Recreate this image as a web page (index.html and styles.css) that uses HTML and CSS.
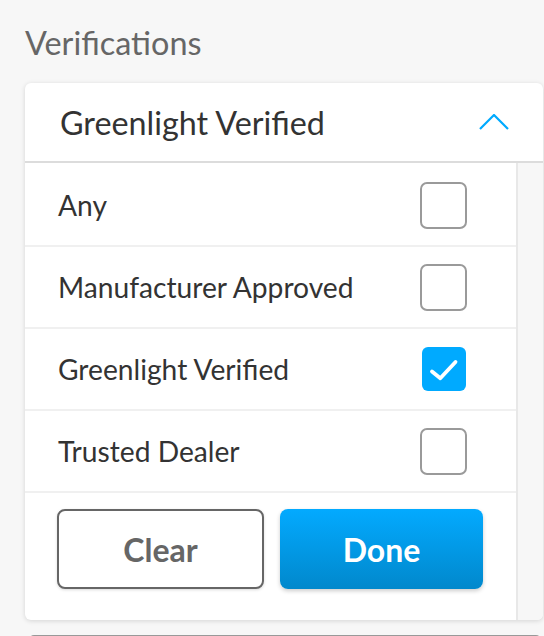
FILE: index.html
```html
<!DOCTYPE html>
<html>
<head>
<meta charset="utf-8">
<link rel="stylesheet" href="styles.css">
</head>
<body>
<div class="page">
  <h2 class="section-title">Verifications</h2>
  <div class="card">
    <div class="card-header">
      <span class="card-title">Greenlight Verified</span>
      <svg class="chevron" width="30" height="16" viewBox="0 0 30 16"><path d="M1 15 L15 1 L29 15" fill="none" stroke="#00aaff" stroke-width="2.2"/></svg>
    </div>
    <div class="card-body">
      <div class="list">
        <div class="row"><span class="label">Any</span><span class="box"></span></div>
        <div class="row"><span class="label">Manufacturer Approved</span><span class="box"></span></div>
        <div class="row"><span class="label">Greenlight Verified</span><span class="box checked"><svg width="44" height="44" viewBox="0 0 44 44"><path d="M10 24.5 L18.3 31.3 L33.5 15" fill="none" stroke="#fff" stroke-width="3.8" stroke-linecap="round" stroke-linejoin="round"/></svg></span></div>
        <div class="row"><span class="label">Trusted Dealer</span><span class="box"></span></div>
        <div class="actions">
          <button class="btn btn-clear">Clear</button>
          <button class="btn btn-done">Done</button>
        </div>
      </div>
      <div class="track"></div>
    </div>
  </div>
  <div class="next"></div>
</div>
</body>
</html>
```
FILE: styles.css
```css
html, body {
  margin: 0;
  padding: 0;
  background: #f7f7f7;
  font-family: Lato, "Open Sans", sans-serif;
}
.page {
  padding: 24px 0 0 25px;
  height: 636px;
  box-sizing: border-box;
  overflow: hidden;
}
.section-title {
  margin: 0 0 21px 0;
  font-size: 32.4px;
  font-weight: 400;
  color: #666;
  line-height: 38px;
}
.card {
  width: 518px;
  background: #fff;
  border-radius: 6px;
  box-shadow: 0 1px 5px rgba(0, 0, 0, 0.14);
  overflow: hidden;
}
.card-header {
  height: 78px;
  border-bottom: 2px solid #dcdcdc;
  display: flex;
  align-items: center;
  justify-content: space-between;
  padding: 0 34px 0 35px;
}
.card-title {
  font-size: 32.3px;
  color: #333;
}
.chevron {
  display: block;
}
.card-body {
  display: flex;
}
.list {
  flex: 1;
  padding-top: 2px;
}
.track {
  width: 25px;
  background: #f7f7f7;
  border-left: 2px solid #e8e8e8;
}
.row {
  height: 80px;
  border-bottom: 2px solid #f0f0f0;
  display: flex;
  align-items: center;
  justify-content: space-between;
  padding: 0 49px 0 33px;
}
.label {
  font-size: 28.2px;
  color: #333;
}
.box {
  width: 43px;
  height: 43px;
  border: 2px solid #9a9a9a;
  border-radius: 7px;
  box-sizing: content-box;
  display: block;
}
.box.checked {
  width: 44px;
  height: 44px;
  border: none;
  background: #00aaff;
  border-radius: 6px;
  margin-right: 1px;
}
.box.checked svg {
  display: block;
}
.actions {
  display: flex;
  gap: 16px;
  padding: 16px 33px 31px 32px;
}
.btn {
  flex: 1 1 0;
  min-width: 0;
  box-sizing: border-box;
  height: 80px;
  border-radius: 8px;
  font-family: Lato, sans-serif;
  font-weight: 700;
  font-size: 32px;
}
.btn-clear {
  background: #fff;
  border: 2px solid #666;
  color: #666;
  box-shadow: 0 1px 3px rgba(0, 0, 0, 0.15);
}
.btn-done {
  border: none;
  color: #fff;
  background: linear-gradient(#03aaff, #0188cc);
  box-shadow: 0 2px 4px rgba(0, 0, 0, 0.2);
}
.next {
  margin: 15px 0 0 5px;
  width: 510px;
  height: 20px;
  border-top: 1px solid #999;
  border-radius: 4px 4px 0 0;
}
```
